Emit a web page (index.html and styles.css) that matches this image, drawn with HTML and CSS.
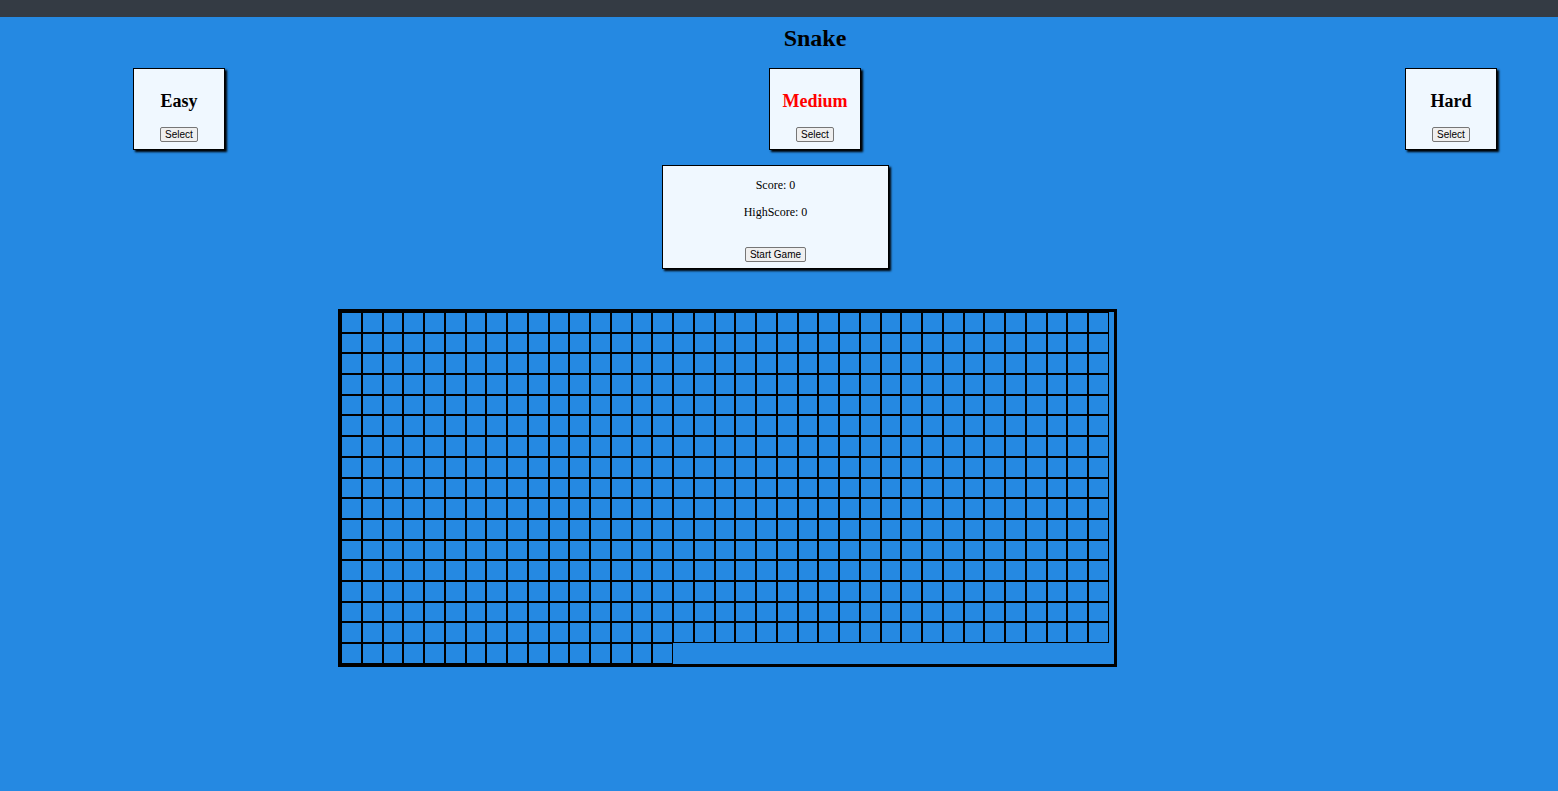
FILE: index.html
```html
<!DOCTYPE html>
<html lang="en">
<head>
<meta charset="utf-8">
<title>Snake</title>
<link rel="stylesheet" href="styles.css">
</head>
<body>
<div class="topbar"></div>
<div class="header">
  <h2 class="title">Snake</h2>
  <div class="levels">
    <div class="card"><h3 class="level">Easy</h3><button class="btn">Select</button></div>
    <div class="card"><h3 class="level level-active">Medium</h3><button class="btn">Select</button></div>
    <div class="card"><h3 class="level">Hard</h3><button class="btn">Select</button></div>
  </div>
</div>
<div class="stage">
  <div class="panel">
    <p class="stat">Score: 0</p>
    <p class="stat stat-high">HighScore: 0</p>
    <button class="btn">Start Game</button>
  </div>
</div>
<div class="board" id="board"></div>
<script src="script.js"></script>
</body>
</html>
```
FILE: styles.css
```css
html, body {
  margin: 0;
  padding: 0;
}
body {
  background: #2589e2;
  font-family: "Liberation Serif", "Times New Roman", serif;
  color: #000;
  overflow: hidden;
  width: 1558px;
  height: 791px;
}
.topbar {
  height: 17px;
  background: #343b44;
}
.header {
  padding-left: 72px;
}
.title {
  margin: 7px 0 0;
  font-size: 24px;
  line-height: 28px;
  font-weight: bold;
  text-align: center;
}
.levels {
  display: flex;
  justify-content: space-between;
  padding: 0 61px;
  margin-top: 16px;
}
.card {
  box-sizing: border-box;
  width: 92px;
  height: 82px;
  background: #f0f8ff;
  border: 1px solid #000;
  box-shadow: 2px 2px 2px #000;
  display: flex;
  flex-direction: column;
  align-items: center;
  padding-top: 22px;
}
.level {
  margin: 0 0 16px;
  font-size: 18px;
  line-height: 20px;
  font-weight: bold;
}
.level-active {
  color: #ff0000;
}
.btn {
  font-family: "Liberation Sans", Arial, sans-serif;
  font-size: 10px;
  line-height: 11px;
  padding: 1px 4px;
  border: 1px solid #767676;
  border-radius: 2px;
  background: #efefef;
  color: #000;
  margin: 0;
}
.stage {
  width: 1551px;
  display: flex;
  justify-content: center;
  margin-top: 15px;
}
.panel {
  box-sizing: border-box;
  width: 227px;
  height: 104px;
  background: #f0f8ff;
  border: 1px solid #000;
  box-shadow: 2px 2px 2px #000;
  display: flex;
  flex-direction: column;
  align-items: center;
  padding-top: 12px;
}
.stat {
  margin: 0;
  font-size: 12px;
  line-height: 14px;
}
.stat-high {
  margin: 13px 0 28px;
}
.board {
  width: 773px;
  border: 3px solid #000;
  margin: 40px 0 0 338px;
  display: flex;
  flex-wrap: wrap;
  align-content: flex-start;
}
.cell {
  box-sizing: border-box;
  width: 20.76px;
  height: 20.7px;
  border: 1px solid #000;
}
```
FILE: script.js
```js
(function () {
  var board = document.getElementById('board');
  var total = 37 * 16 + 16;
  var frag = document.createDocumentFragment();
  for (var i = 0; i < total; i++) {
    var c = document.createElement('div');
    c.className = 'cell';
    frag.appendChild(c);
  }
  board.appendChild(frag);
})();
```
